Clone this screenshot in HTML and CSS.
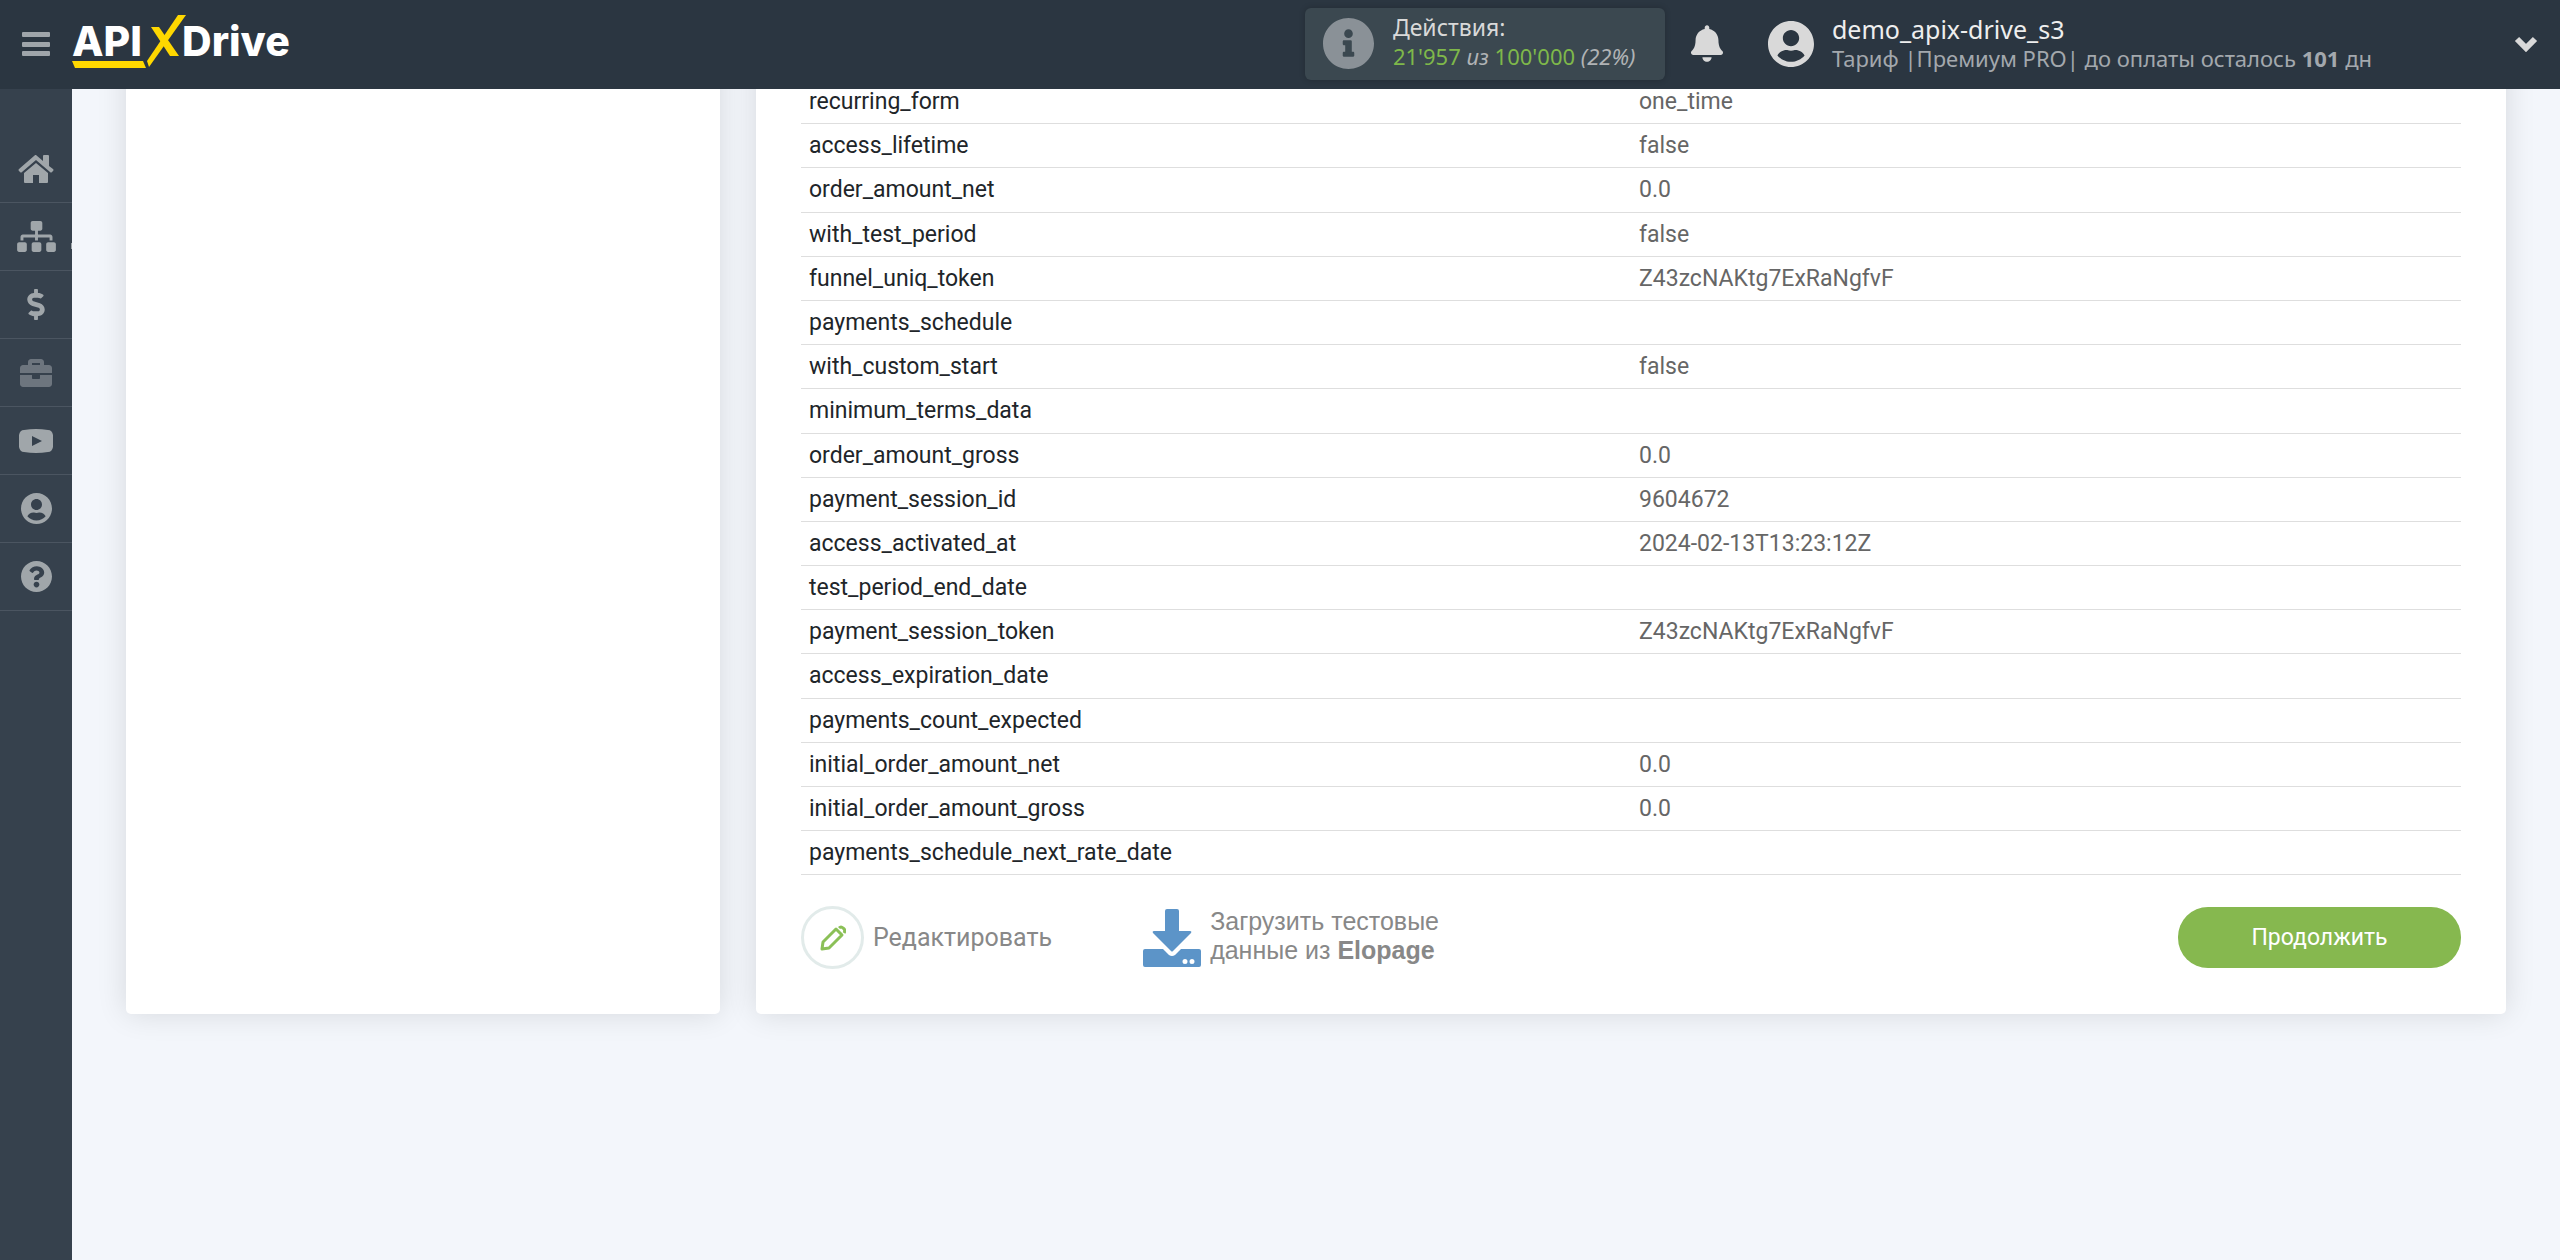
FILE: index.html
```html
<!DOCTYPE html>
<html lang="ru">
<head>
<meta charset="utf-8">
<meta name="viewport" content="width=device-width, initial-scale=1">
<title>ApiX-Drive</title>
<link rel="stylesheet" href="styles.css">
</head>
<body>
<header class="topbar">
  <button class="menu-btn" type="button" aria-label="Меню">
    <svg viewBox="0 0 28 24" width="28" height="24"><rect width="28" height="5" rx="1"/><rect y="10" width="28" height="5" rx="1"/><rect y="19" width="28" height="5" rx="1"/></svg>
  </button>
  <a class="logo" href="#" aria-label="APIXDrive">
    <svg viewBox="0 0 222 54" width="222" height="54">
      <text x="0" y="41">API</text>
      <text x="110" y="41">Drive</text>
      <g class="logo-mark">
        <path d="M0 46H71L74 53H3Z"/>
        <path d="M79 12H87L107 41H98Z"/>
        <path d="M106 0H114L77 52L75 46Z"/>
      </g>
    </svg>
  </a>
  <a class="usage" href="#">
    <svg class="usage-icon" viewBox="8 8 496 496" width="51" height="51"><path d="M256 8C119.043 8 8 119.083 8 256c0 136.997 111.043 248 248 248s248-111.003 248-248C504 119.083 392.957 8 256 8zm0 110c23.196 0 42 18.804 42 42s-18.804 42-42 42-42-18.804-42-42 18.804-42 42-42zm56 254c0 6.627-5.373 12-12 12h-88c-6.627 0-12-5.373-12-12v-24c0-6.627 5.373-12 12-12h12v-64h-12c-6.627 0-12-5.373-12-12v-24c0-6.627 5.373-12 12-12h64c6.627 0 12 5.373 12 12v100h12c6.627 0 12 5.373 12 12v24z"/></svg>
    <span class="usage-text">
      <span class="usage-title">Действия:</span>
      <span class="usage-count"><b>21'957</b> <i>из</i> <b>100'000</b> <i>(22%)</i></span>
    </span>
  </a>
  <button class="bell" type="button" aria-label="Уведомления">
    <svg viewBox="0 0 448 512" width="32" height="37"><path d="M224 512c35.32 0 63.97-28.65 63.97-64H160.03c0 35.35 28.65 64 63.97 64zm215.39-149.71c-19.32-20.76-55.47-51.99-55.47-154.29 0-77.7-54.48-139.9-127.94-155.16V32c0-17.67-14.32-32-31.98-32s-31.98 14.33-31.98 32v20.84C118.56 68.1 64.08 130.3 64.08 208c0 102.3-36.15 133.53-55.47 154.29-6 6.45-8.66 14.16-8.61 21.71.11 16.4 12.98 32 32.1 32h383.8c19.12 0 32-15.6 32.1-32 .05-7.55-2.61-15.27-8.61-21.71z"/></svg>
  </button>
  <a class="account" href="#">
    <svg viewBox="0 8 496 496" width="46" height="46"><path d="M248 8C111 8 0 119 0 256s111 248 248 248 248-111 248-248S385 8 248 8zm0 96c48.6 0 88 39.4 88 88s-39.4 88-88 88-88-39.4-88-88 39.4-88 88-88zm0 344c-58.7 0-111.3-26.6-146.5-68.2 18.8-35.4 55.6-59.8 98.5-59.8 2.4 0 4.8.4 7.1 1.1 13 4.2 26.6 6.9 40.9 6.9 14.3 0 28-2.7 40.9-6.9 2.3-.7 4.7-1.1 7.1-1.1 42.9 0 79.7 24.4 98.5 59.8C359.3 421.4 306.7 448 248 448z"/></svg>
    <span class="account-text">
      <span class="account-name">demo_apix-drive_s3</span>
      <span class="account-plan">Тариф |Премиум PRO| до оплаты осталось <b>101</b> дн</span>
    </span>
  </a>
  <button class="expand" type="button" aria-label="Развернуть">
    <svg class="line-icon" viewBox="0 0 24 16" width="24" height="16" stroke-width="6"><path d="M3 3l9 9l9-9"/></svg>
  </button>
</header>

<nav class="sidebar" aria-label="Разделы">
  <ul>
    <li><a href="#" aria-label="Главная"><svg viewBox="0 0 36 28" width="36" height="28"><path d="M18 0L25 6V1Q25 0 26 0H30Q31 0 31 1V11L35 14Q36 15 35 16L34 17Q33 18 32 17L18 5L4 17Q3 18 2 17L1 16Q0 15 1 14L16 1Q18-1 18 0Z"/><path d="M18 8L30 18V27Q30 28 29 28H21V20H15V28H7Q6 28 6 27V18Z"/></svg></a></li>
    <li class="has-sub"><a href="#" aria-label="Связи"><svg viewBox="0 0 640 512" width="39" height="31"><path d="M128 352H32c-17.670 0-32 14.330-32 32v96c0 17.670 14.330 32 32 32h96c17.670 0 32-14.330 32-32v-96c0-17.670-14.330-32-32-32zm-24-80h192v48h48v-48h192v48h48v-57.590c0-21.170-17.230-38.410-38.410-38.410H344v-64h40c17.670 0 32-14.330 32-32V32c0-17.670-14.330-32-32-32H256c-17.670 0-32 14.330-32 32v96c0 17.670 14.330 32 32 32h40v64H94.410C73.230 224 56 241.230 56 262.410V320h48v-48zm264 80h-96c-17.670 0-32 14.330-32 32v96c0 17.670 14.330 32 32 32h96c17.670 0 32-14.330 32-32v-96c0-17.670-14.330-32-32-32zm240 0h-96c-17.670 0-32 14.330-32 32v96c0 17.670 14.330 32 32 32h96c17.670 0 32-14.330 32-32v-96c0-17.670-14.330-32-32-32z"/></svg></a></li>
    <li><a href="#" aria-label="Оплата"><svg viewBox="0 0 288 512" width="18" height="31"><path d="M209.200 233.400l-108-31.600C88.700 198.200 80 186.500 80 173.500c0-16.300 13.200-29.500 29.500-29.500h66.300c12.200 0 24.200 3.700 34.200 10.500 6.100 4.100 14.300 3.100 19.500-2l34.800-34c7.100-6.900 6.100-18.400-1.800-24.500C238 74.800 207.400 64.100 176 64V16c0-8.800-7.200-16-16-16h-32c-8.800 0-16 7.200-16 16v48h-2.500C45.800 64-5.400 118.700.5 183.600c4.200 46.100 39.400 83.600 83.800 96.600l102.500 30c12.500 3.700 21.200 15.300 21.200 28.300 0 16.300-13.200 29.500-29.500 29.500h-66.300C100 368 88 364.300 78 357.500c-6.100-4.100-14.300-3.100-19.500 2l-34.800 34c-7.100 6.900-6.100 18.400 1.800 24.500 24.500 19.200 55.100 29.900 86.500 30v48c0 8.800 7.200 16 16 16h32c8.800 0 16-7.200 16-16v-48.200c46.600-.9 90.300-28.600 105.700-72.700 21.500-61.600-14.600-124.800-72.500-141.700z"/></svg></a></li>
    <li class="dim"><a href="#" aria-label="Проекты"><svg viewBox="0 32 512 448" width="32" height="28"><path d="M320 336c0 8.840-7.160 16-16 16h-96c-8.840 0-16-7.160-16-16v-48H0v144c0 25.600 22.400 48 48 48h416c25.600 0 48-22.400 48-48V288H320v48zm144-208h-80V80c0-25.600-22.400-48-48-48H176c-25.600 0-48 22.400-48 48v48H48c-25.600 0-48 22.400-48 48v80h512v-80c0-25.600-22.400-48-48-48zm-144 0H192V96h128v32z"/></svg></a></li>
    <li><a href="#" aria-label="Видео"><svg viewBox="0 0 34 24" width="34" height="24"><path fill-rule="evenodd" d="M5 1Q17-1 29 1Q33 1 34 6Q34 12 34 18Q33 23 29 23Q17 25 5 23Q1 23 0 18Q0 12 0 6Q1 1 5 1ZM13 7V17L23 12Z"/></svg></a></li>
    <li><a href="#" aria-label="Профиль"><svg viewBox="0 8 496 496" width="31" height="31"><path d="M248 8C111 8 0 119 0 256s111 248 248 248 248-111 248-248S385 8 248 8zm0 96c48.600 0 88 39.400 88 88s-39.400 88-88 88-88-39.400-88-88 39.400-88 88-88zm0 344c-58.700 0-111.300-26.600-146.500-68.200 18.800-35.400 55.600-59.800 98.500-59.800 2.400 0 4.800.4 7.100 1.100 13 4.200 26.600 6.900 40.900 6.900 14.300 0 28-2.700 40.900-6.900 2.300-.7 4.700-1.100 7.100-1.100 42.900 0 79.700 24.400 98.500 59.800C359.300 421.400 306.700 448 248 448z"/></svg></a></li>
    <li><a href="#" aria-label="Помощь"><svg viewBox="8 8 496 496" width="31" height="31"><path d="M504 256c0 136.997-111.043 248-248 248S8 392.997 8 256C8 119.083 119.043 8 256 8s248 111.083 248 248zM262.655 90c-54.497 0-89.255 22.957-116.549 63.758-3.536 5.286-2.353 12.415 2.715 16.258l34.699 26.310c5.205 3.947 12.621 3.008 16.665-2.122 17.864-22.658 30.113-35.797 57.303-35.797 20.429 0 45.698 13.148 45.698 32.958 0 14.976-12.363 22.667-32.534 33.976C247.128 238.528 216 254.941 216 296v4c0 6.627 5.373 12 12 12h56c6.627 0 12-5.373 12-12v-1.333c0-28.462 83.186-29.647 83.186-106.667 0-58.002-60.165-102-116.531-102zM256 338c-25.365 0-46 20.635-46 46 0 25.364 20.635 46 46 46s46-20.636 46-46c0-25.365-20.635-46-46-46z"/></svg></a></li>
  </ul>
</nav>

<main class="content">
  <aside class="card steps"></aside>
  <section class="card data">
    <table class="fields">
      <tbody>
        <tr><th scope="row">recurring_form</th><td>one_time</td></tr>
        <tr><th scope="row">access_lifetime</th><td>false</td></tr>
        <tr><th scope="row">order_amount_net</th><td>0.0</td></tr>
        <tr><th scope="row">with_test_period</th><td>false</td></tr>
        <tr><th scope="row">funnel_uniq_token</th><td>Z43zcNAKtg7ExRaNgfvF</td></tr>
        <tr><th scope="row">payments_schedule</th><td></td></tr>
        <tr><th scope="row">with_custom_start</th><td>false</td></tr>
        <tr><th scope="row">minimum_terms_data</th><td></td></tr>
        <tr><th scope="row">order_amount_gross</th><td>0.0</td></tr>
        <tr><th scope="row">payment_session_id</th><td>9604672</td></tr>
        <tr><th scope="row">access_activated_at</th><td>2024-02-13T13:23:12Z</td></tr>
        <tr><th scope="row">test_period_end_date</th><td></td></tr>
        <tr><th scope="row">payment_session_token</th><td>Z43zcNAKtg7ExRaNgfvF</td></tr>
        <tr><th scope="row">access_expiration_date</th><td></td></tr>
        <tr><th scope="row">payments_count_expected</th><td></td></tr>
        <tr><th scope="row">initial_order_amount_net</th><td>0.0</td></tr>
        <tr><th scope="row">initial_order_amount_gross</th><td>0.0</td></tr>
        <tr><th scope="row">payments_schedule_next_rate_date</th><td></td></tr>
      </tbody>
    </table>
    <div class="actions">
      <a class="action edit" href="#">
        <span class="edit-ring"><svg class="line-icon" viewBox="0 0 26 26" width="26" height="26" stroke-width="3" stroke-linejoin="round"><path d="M2 24L3 17L16 4L22 10L9 23Z"/><path d="M19 3Q21 1 23 3Q26 5 24 8"/></svg></span>
        <span>Редактировать</span>
      </a>
      <a class="action load" href="#">
        <svg viewBox="0 0 58 58" width="58" height="58"><path d="M24 0H34Q36 0 36 2V22H47Q49 22 48 24L30 42Q29 43 28 42L10 24Q9 22 11 22H22V2Q22 0 24 0Z"/><path fill-rule="evenodd" d="M2 40H20L26 46Q29 48 32 46L38 40H56Q58 40 58 42V56Q58 58 56 58H2Q0 58 0 56V42Q0 40 2 40ZM42 50a2.500 2.500 0 1 0 0 5a2.500 2.500 0 1 0 0-5ZM49 50a2.500 2.500 0 1 0 0 5a2.500 2.500 0 1 0 0-5Z"/></svg>
        <span>Загрузить тестовые<br>данные из <b>Elopage</b></span>
      </a>
      <button class="continue" type="button">Продолжить</button>
    </div>
  </section>
</main>
</body>
</html>
```

FILE: styles.css
```css
* {
  box-sizing: border-box;
}

body {
  margin: 0;
  min-height: 100vh;
  background: #f3f6fb;
  font-family: Roboto, "Noto Sans", sans-serif;
  font-size: 23px;
}

a {
  color: inherit;
  text-decoration: none;
}

button {
  padding: 0;
  border: 0;
  background: none;
  font: inherit;
  cursor: pointer;
}

svg {
  display: block;
  flex: none;
  fill: currentColor;
}

.line-icon {
  fill: none;
  stroke: currentColor;
}

/* Top bar */
.topbar {
  position: fixed;
  z-index: 2;
  top: 0;
  left: 0;
  right: 0;
  height: 89px;
  padding: 0 22px 2px;
  display: flex;
  align-items: center;
  background: #2b3641;
  color: #d9d9d9;
  font-family: "Noto Sans", sans-serif;
  font-size: 22px;
}

.menu-btn {
  margin-right: 22px;
  color: #9fa5aa;
}

.logo {
  margin-right: auto;
  padding-bottom: 4px;
  color: #fff;
  font: 800 41px Inter, sans-serif;
}

.logo-mark {
  fill: #ffd800;
}

.usage {
  display: flex;
  align-items: center;
  width: 360px;
  height: 72px;
  padding: 0 18px;
  gap: 19px;
  border-radius: 6px;
  background: #3b4850;
  box-shadow: 0 0 6px rgba(0, 0, 0, 0.2);
}

.usage-icon {
  color: #8a9197;
}

.usage-text,
.account-text {
  display: grid;
  line-height: 29px;
  white-space: nowrap;
}

.usage-text {
  padding-bottom: 3px;
}

.usage-title {
  font-size: 23px;
}

.usage-count {
  color: #b0b3b5;
}

.usage-count b {
  color: #7fb84a;
  font-weight: 400;
}

.bell {
  margin: 0 45px 0 26px;
  color: inherit;
}

.account {
  display: flex;
  align-items: center;
  gap: 18px;
}

.account-name {
  color: #eee;
  font-size: 25px;
}

.account-plan {
  color: #a3a8ad;
}

.expand {
  margin-left: 142px;
  color: inherit;
}

/* Side navigation */
.sidebar {
  position: fixed;
  z-index: 1;
  top: 0;
  bottom: 0;
  left: 0;
  width: 72px;
  padding-top: 135px;
  background: #36414d;
  color: #a0a6aa;
}

.sidebar ul {
  margin: 0;
  padding: 0;
  list-style: none;
}

.sidebar a {
  display: flex;
  align-items: center;
  justify-content: center;
  height: 68px;
  border-bottom: 1px solid #4b5561;
}

.dim {
  color: #6d757e;
}

.has-sub {
  position: relative;
}

.has-sub::after {
  content: "";
  position: absolute;
  right: 0;
  bottom: 22px;
  width: 1px;
  height: 6px;
  background: #a0a6aa;
}

/* Page content */
.content {
  display: grid;
  grid-template-columns: 594fr 1750fr;
  gap: 36px;
  padding: 0 54px 60px 126px;
}

.card {
  padding: 80px 45px 45px;
  border-radius: 5px;
  background: #fff;
  box-shadow: 0 0 30px rgba(0, 0, 0, 0.12);
}

.fields {
  width: 100%;
  table-layout: fixed;
  border-collapse: collapse;
  line-height: 1.53;
  text-align: left;
}

.fields th,
.fields td {
  padding: 4px 8px;
  border-bottom: 1px solid #dedede;
  color: #666;
}

.fields th {
  color: #212529;
  font-weight: 400;
}

.actions {
  display: flex;
  align-items: center;
  padding-top: 31px;
  color: #888;
}

.action {
  display: flex;
  align-items: center;
  gap: 9px;
  line-height: 29px;
}

.edit {
  margin-right: 91px;
  font-size: 25px;
}

.edit-ring {
  display: grid;
  place-items: center;
  width: 63px;
  height: 63px;
  border: 3px solid #e2ebea;
  border-radius: 50%;
  color: #8bc057;
}

.load {
  font-family: "Liberation Sans", Arial, sans-serif;
  font-size: 25px;
}

.load span {
  padding-bottom: 4px;
}

.load svg {
  color: #5c94c8;
}

.continue {
  width: 283px;
  height: 61px;
  margin-left: auto;
  border-radius: 30px;
  background: #86b84f;
  color: #fff;
}
```
